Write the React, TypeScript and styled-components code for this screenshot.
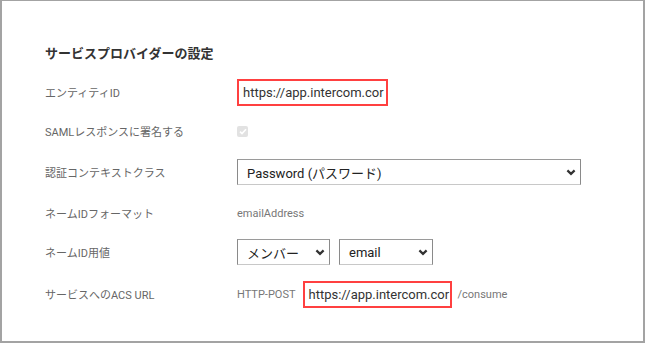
import React from "react";
import styled, { createGlobalStyle } from "styled-components";

const Global = createGlobalStyle`
  html, body { margin: 0; padding: 0; background: #fff; }
  * { box-sizing: border-box; }
`;

const FONT = `"Roboto", "Noto Sans CJK JP", sans-serif`;

const Frame = styled.div`
  width: 645px;
  height: 343px;
  border-top: 1px solid #a3a3a3;
  border-left: 2px solid #a3a3a3;
  border-right: 2px solid #a3a3a3;
  border-bottom: 2px solid #a3a3a3;
  background: #fff;
  padding: 44px 0 0 43px;
  font-family: ${FONT};
`;

const Heading = styled.h2`
  margin: 0 0 9px 0;
  font-size: 13px;
  line-height: 18px;
  font-weight: 700;
  color: #333;
`;

const Row = styled.div<{ $h: number }>`
  display: grid;
  grid-template-columns: 192px auto;
  align-items: center;
  height: ${(p) => p.$h}px;
`;

const Label = styled.div`
  font-size: 11px;
  color: #666;
  white-space: nowrap;
`;

const Field = styled.div`
  display: flex;
  align-items: center;
`;

const Muted = styled.span<{ $ml?: number }>`
  font-size: 11px;
  color: #777;
  margin-left: ${(p) => p.$ml ?? 0}px;
`;

const Annotated = styled.div<{ $w: number; $ml?: number }>`
  width: ${(p) => p.$w}px;
  height: 27px;
  margin-left: ${(p) => p.$ml ?? 0}px;
  border: 2px solid #ff4040;
  padding-left: 4px;
  display: flex;
  align-items: center;
  overflow: hidden;
  white-space: nowrap;
  font-size: 13px;
  color: #333;
  background: #fff;
`;

const Select = styled.div<{ $w: number; $ml?: number }>`
  width: ${(p) => p.$w}px;
  height: 26px;
  margin-left: ${(p) => p.$ml ?? 0}px;
  border: 1px solid #8a8a8a;
  border-top-color: #9a9a9a;
  border-bottom-color: #c8c8c8;
  display: flex;
  align-items: center;
  justify-content: space-between;
  padding: 0 4px 0 9px;
  font-size: 13px;
  color: #222;
  background: #fff;
`;

const Check = styled.span`
  width: 11px;
  height: 11px;
  border-radius: 2px;
  background: #e2e2e2;
  display: inline-flex;
  align-items: center;
  justify-content: center;
`;

const Chevron = () => (
  <svg width="10" height="7" viewBox="0 0 10 7">
    <path d="M1.4 1.4 L5 4.9 L8.6 1.4" fill="none" stroke="#333" strokeWidth="2.2" />
  </svg>
);

export default function App() {
  return (
    <>
      <Global />
      <Frame>
        <Heading>サービスプロバイダーの設定</Heading>
        <Row $h={40}>
          <Label>エンティティID</Label>
          <Field>
            <Annotated $w={151}>https://app.intercom.cor</Annotated>
          </Field>
        </Row>
        <Row $h={38}>
          <Label>SAMLレスポンスに署名する</Label>
          <Field>
            <Check>
              <svg width="8" height="7" viewBox="0 0 8 7">
                <path d="M1 3.6 L3 5.6 L7 1.2" fill="none" stroke="#fff" strokeWidth="1.6" />
              </svg>
            </Check>
          </Field>
        </Row>
        <Row $h={44}>
          <Label>認証コンテキストクラス</Label>
          <Field>
            <Select $w={344}>
              <span>Password (パスワード)</span>
              <Chevron />
            </Select>
          </Field>
        </Row>
        <Row $h={38}>
          <Label>ネームIDフォーマット</Label>
          <Field>
            <Muted>emailAddress</Muted>
          </Field>
        </Row>
        <Row $h={40}>
          <Label>ネームID用値</Label>
          <Field>
            <Select $w={93}>
              <span>メンバー</span>
              <Chevron />
            </Select>
            <Select $w={94} $ml={9}>
              <span>email</span>
              <Chevron />
            </Select>
          </Field>
        </Row>
        <Row $h={44}>
          <Label>サービスへのACS URL</Label>
          <Field>
            <Muted>HTTP-POST</Muted>
            <Annotated $w={149} $ml={7}>https://app.intercom.cor</Annotated>
            <Muted $ml={6}>/consume</Muted>
          </Field>
        </Row>
      </Frame>
    </>
  );
}
